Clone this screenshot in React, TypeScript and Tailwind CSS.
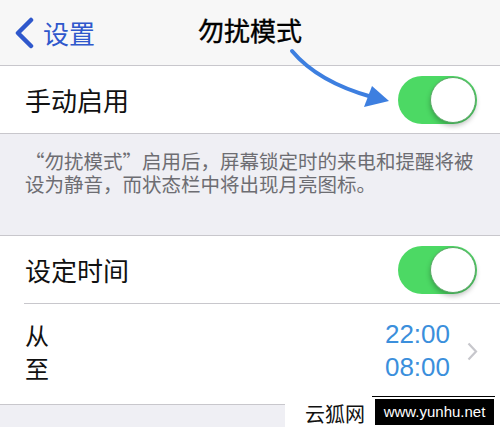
function Toggle() {
  return (
    <div className="relative h-[48px] w-[79px] rounded-full bg-[#4cd964]">
      <div className="absolute right-[1px] top-[1px] h-[46px] w-[46px] rounded-full border border-[#5aa866] bg-white shadow-[0_3px_5px_rgba(0,0,0,0.25)]" />
    </div>
  );
}

export default function App() {
  return (
    <div className="relative h-[427px] w-[500px] overflow-hidden bg-[#efeff4] font-['Noto_Sans_CJK_SC',sans-serif] text-[#111]">
      {/* nav bar */}
      <div className="relative flex h-[66px] items-center border-b border-[#c8c7cc] bg-[#f7f7f7]">
        <div className="flex items-center pl-[13px] text-[#2f58cc]">
          <svg width="22" height="32" viewBox="0 0 22 32">
            <path d="M18 3 L5 16 L18 29" fill="none" stroke="#2f58cc" strokeWidth="4.5" strokeLinecap="round" strokeLinejoin="round" />
          </svg>
          <span className="ml-[8px] text-[26px] leading-none">设置</span>
        </div>
        <div className="absolute left-0 right-0 top-[17px] text-center text-[26px] font-normal leading-none text-black [-webkit-text-stroke:0.4px_black]">勿扰模式</div>
      </div>

      {/* manual */}
      <div className="flex h-[68px] items-center justify-between border-b border-[#c8c7cc] bg-white pl-[25px] pr-[23px]">
        <span className="text-[26px] leading-none">手动启用</span>
        <Toggle />
      </div>

      {/* footer note */}
      <div className="h-[101px] px-[25px] pt-[15px] text-[19.5px] leading-[23px] text-[#6d6d72]">
        <p>“勿扰模式”启用后，屏幕锁定时的来电和提醒将被</p>
        <p>设为静音，而状态栏中将出现月亮图标。</p>
      </div>

      {/* schedule */}
      <div className="border-y border-[#c8c7cc] bg-white">
        <div className="flex h-[67px] items-center justify-between pl-[25px] pr-[23px]">
          <span className="text-[26px] leading-none">设定时间</span>
          <Toggle />
        </div>
        <div className="ml-[24px] h-px bg-[#c8c7cc]" />
        <div className="flex h-[100px] items-center justify-between pb-[6px] pl-[25px] pr-[22px]">
          <div className="flex flex-col gap-[12px] text-[24px] leading-[21px]">
            <span>从</span>
            <span>至</span>
          </div>
          <div className="flex items-center gap-[17px]">
            <div className="flex flex-col gap-[12px] font-['Liberation_Sans',sans-serif] text-[26px] leading-[21px] text-[#3b8fdc]">
              <span>22:00</span>
              <span>08:00</span>
            </div>
            <svg width="11" height="19" viewBox="0 0 11 19">
              <path d="M1.5 1.5 L9 9.5 L1.5 17.5" fill="none" stroke="#c7c7cc" strokeWidth="2.2" />
            </svg>
          </div>
        </div>
      </div>

      {/* annotation arrow */}
      <svg className="absolute left-0 top-0" width="500" height="427" viewBox="0 0 500 427">
        <path d="M292 51 Q318 82 372 97" fill="none" stroke="#3d7fe0" strokeWidth="4" strokeLinecap="round" />
        <path d="M364 107 L372 86 L389 101 Z" fill="#3d7fe0" />
      </svg>

      {/* watermark */}
      <div className="absolute bottom-0 right-0 flex h-[28px] items-end bg-white pl-[20px]">
        <span className="mb-[2px] mr-[10px] font-['Liberation_Serif','Noto_Sans_CJK_SC',serif] text-[20px] leading-none">云狐网</span>
        <div className="mb-[2px] mr-[6px] flex h-[26px] w-[119px] items-center justify-center bg-black font-['Liberation_Sans',sans-serif] text-[15px] text-white">
          www.yunhu.net
        </div>
      </div>
      <div className="absolute left-[372px] top-[396px] h-px w-[123px] bg-black" />
    </div>
  );
}
